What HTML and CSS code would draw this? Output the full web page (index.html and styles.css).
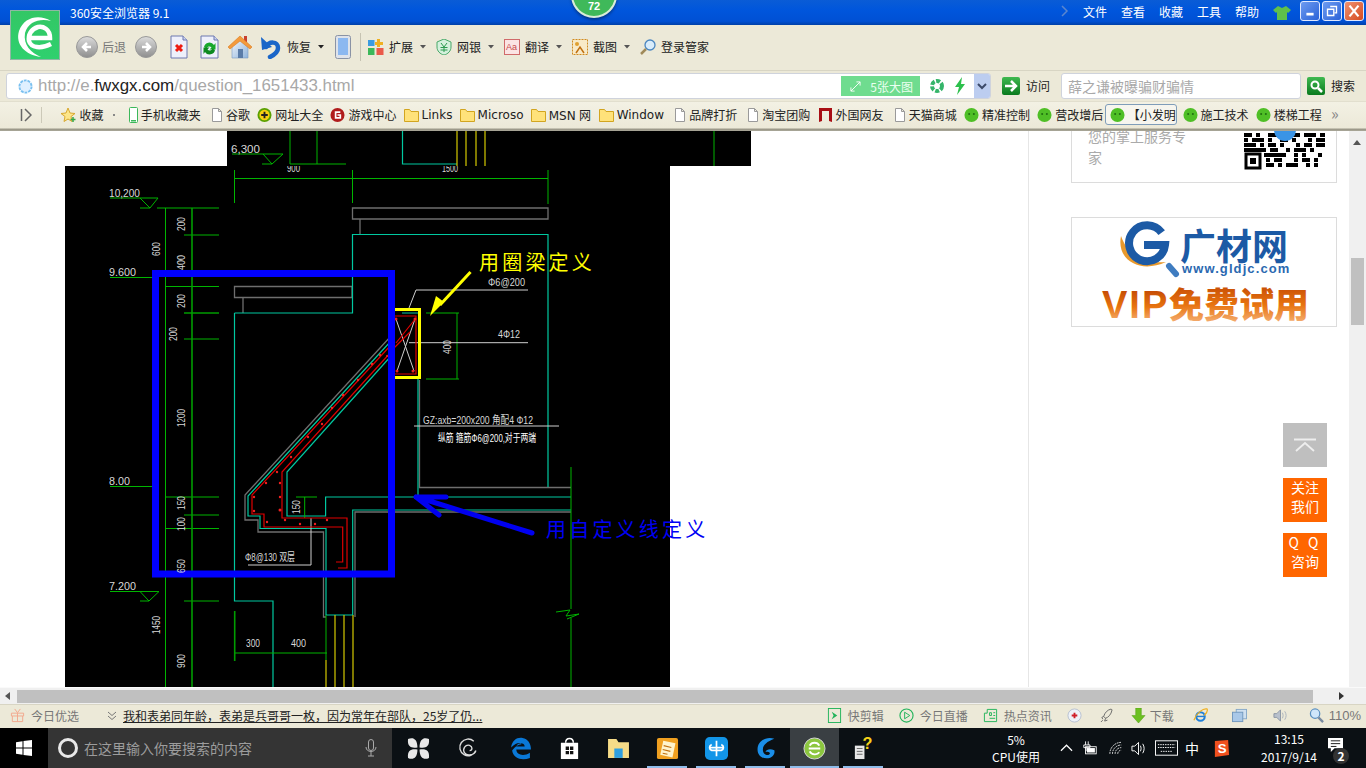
FILE: index.html
```html
<!DOCTYPE html>
<html lang="zh-CN">
<head>
<meta charset="utf-8">
<title>360安全浏览器 9.1</title>
<link rel="stylesheet" href="styles.css">
</head>
<body>
<svg class="defs" aria-hidden="true">
  <defs>
    <linearGradient id="gGray" x1="0" y1="0" x2="0" y2="1"><stop offset="0" stop-color="#dcdcdc"/><stop offset="1" stop-color="#8e8e8e"/></linearGradient>
    <linearGradient id="gGreen" x1="0" y1="0" x2="0" y2="1"><stop offset="0" stop-color="#3fb950"/><stop offset="1" stop-color="#0a7a1e"/></linearGradient>
    <linearGradient id="gWall" x1="0" y1="0" x2="1" y2="1"><stop offset="0" stop-color="#f2f6fb"/><stop offset="1" stop-color="#8fb4dc"/></linearGradient>
    <linearGradient id="gVip" x1="0" y1="0" x2="0" y2="1"><stop offset="0" stop-color="#b83c00"/><stop offset=".55" stop-color="#e87410"/><stop offset="1" stop-color="#f8c090"/></linearGradient>
    <clipPath id="lowerImage"><rect x="65" y="166" width="605" height="521"/></clipPath>
    <symbol id="file" viewBox="0 0 15 16"><path d="M4.500 1.500h6l3 3v10h-9z M10.500 1.500v3h3" fill="#fff" stroke="#9a9a9a"/></symbol>
    <symbol id="folder" viewBox="0 0 15 16"><path d="M.5 2.500h5l1.500 2h7.500v10H.5z" fill="#ffe27a" stroke="#d2a520"/></symbol>
    <symbol id="wechat" viewBox="0 0 16 16"><circle cx="8" cy="8" r="7.500" fill="#4fbf26"/><path d="M4 13l1-3 2 2z" fill="#4fbf26"/><circle cx="5.500" cy="7" r="1.100" fill="#1f6e10"/><circle cx="10.500" cy="7" r="1.100" fill="#1f6e10"/></symbol>
    <symbol id="caret" viewBox="0 0 6 4"><path d="M0 0h6L3 3.500z" fill="#555"/></symbol>
  </defs>
</svg>

<div class="screen">
  <header class="titlebar">
    <span class="title">360安全浏览器 9.1</span>
    <nav class="menu">
      <svg class="menu-chev" viewBox="0 0 8 12"><path d="M1 1l5 5-5 5" fill="none" stroke="#5a86cf" stroke-width="1.500"/></svg>
      <span>文件</span><span>查看</span><span>收藏</span><span>工具</span><span>帮助</span>
      <svg class="shirt" viewBox="0 0 18 16"><path d="M5 1l4 2 4-2 5 4-3 3-1-1v8H4V7L3 8 0 5z" fill="#5fc04a"/></svg>
    </nav>
    <div class="winbtns">
      <span class="winbtn"><svg viewBox="0 0 20 20"><rect x="6" y="12" width="8" height="3" fill="#fff"/></svg></span>
      <span class="winbtn"><svg viewBox="0 0 20 20"><path d="M8 5h7v7h-2 M5 8h7v7H5z" fill="none" stroke="#fff" stroke-width="1.500"/></svg></span>
      <span class="winbtn close"><svg viewBox="0 0 20 20"><path d="M5 4l10 12M15 4L5 16" stroke="#fff" stroke-width="2.500"/></svg></span>
    </div>
  </header>

  <div class="toolbar">
    <svg class="tb-back" viewBox="0 0 22 22"><circle cx="11" cy="11" r="10.500" fill="url(#gGray)" stroke="#999"/><path d="M15 11H8M11 7l-4 4 4 4" fill="none" stroke="#fff" stroke-width="2.500"/></svg>
    <span class="tb-label muted back-label">后退</span>
    <svg class="tb-fwd" viewBox="0 0 22 22"><circle cx="11" cy="11" r="10.500" fill="url(#gGray)" stroke="#999"/><path d="M7 11h7M11 7l4 4-4 4" fill="none" stroke="#fff" stroke-width="2.500"/></svg>
    <svg class="tb-doc" viewBox="0 0 18 24"><path d="M1 1h12l4 4v18H1z" fill="#eef0fb" stroke="#6c78b0"/><path d="M13 1v4h4" fill="#cdd4ee" stroke="#6c78b0"/><path d="M6 10l6 6M12 10l-6 6" stroke="#ee1c10" stroke-width="3"/></svg>
    <svg class="tb-doc2" viewBox="0 0 19 24"><path d="M1 1h13l4 4v18H1z" fill="#eef0fb" stroke="#6c78b0"/><path d="M14 1v4h4" fill="#cdd4ee" stroke="#6c78b0"/><path d="M4 12a5.500 5.500 0 0 1 10-2l1.500-2v6.500H9.500l2-2a3 3 0 0 0-5 1z" fill="#18a82c"/><path d="M15 15a5.500 5.500 0 0 1-10 2l-1.500 2v-6.500h6l-2 2a3 3 0 0 0 5-1z" fill="#0d8a20"/></svg>
    <svg class="tb-home" viewBox="0 0 24 26"><rect x="16" y="2" width="3" height="6" fill="#c84030"/><path d="M4 12L12 5l8 7v12H4z" fill="url(#gWall)" stroke="#7a9cc4" stroke-width=".6"/><path d="M12 2L0 13l2 2 10-8 10 8 2-2z" fill="#f49a3c" stroke="#d87c20" stroke-width=".6"/><rect x="10" y="15" width="5" height="9" fill="#5a7ca8"/></svg>
    <svg class="tb-undo" viewBox="0 0 22 24"><path d="M7 12C10 6 19 6 19 13c0 4-4 7-8 9" fill="none" stroke="#1a66c8" stroke-width="4.500" stroke-linecap="round"/><path d="M2 2l1 13 10-3z" fill="#1a66c8"/></svg>
    <span class="tb-label restore-label">恢复</span>
    <svg class="tb-caret dark" viewBox="0 0 6 4"><path d="M0 0h6L3 3.500z" fill="#222"/></svg>
    <svg class="tb-phone" viewBox="0 0 16 24"><rect x=".5" y=".5" width="15" height="23" rx="2" fill="#dfe3ea" stroke="#8a93a5"/><rect x="3" y="3" width="10" height="17" fill="#8cb8f0"/></svg>
    <span class="tb-sep"></span>
    <div class="tool">
      <svg viewBox="0 0 16 16"><rect x="0" y="1" width="6.500" height="6" fill="#3b9be0"/><path d="M12 0v3h3v3h-3v2H9V6H7V3h2V0z" fill="#f0b020"/><rect x="0" y="9" width="6.500" height="7" fill="#3cb85a"/><rect x="8.500" y="9" width="7" height="7" fill="#ea5a4a"/></svg>
      <span class="tb-label">扩展</span><svg class="tb-caret" viewBox="0 0 6 4"><use href="#caret"/></svg>
    </div>
    <div class="tool">
      <svg viewBox="0 0 16 16"><path d="M8 0l7 3v5c0 4-3 7-7 8-4-1-7-4-7-8V3z" fill="#d4f0dc" stroke="#48a868"/><path d="M5 4l3 4 3-4M4.500 8.500h7M4.500 11h7M8 8v5" fill="none" stroke="#2c9a50"/></svg>
      <span class="tb-label">网银</span><svg class="tb-caret" viewBox="0 0 6 4"><use href="#caret"/></svg>
    </div>
    <div class="tool">
      <svg viewBox="0 0 16 16"><rect x=".5" y=".5" width="15" height="15" fill="#fbe4e4" stroke="#d06a6a"/><text class="aa" x="2" y="11">Aa</text></svg>
      <span class="tb-label">翻译</span><svg class="tb-caret" viewBox="0 0 6 4"><use href="#caret"/></svg>
    </div>
    <div class="tool">
      <svg viewBox="0 0 16 16"><rect x=".5" y=".5" width="15" height="15" fill="#f8eac8" stroke="#d08a20" stroke-dasharray="2 1"/><circle cx="5" cy="5" r="2" fill="#e0a030"/><path d="M4 14l4-6 4 6" fill="none" stroke="#c07010" stroke-width="1.500"/></svg>
      <span class="tb-label">截图</span><svg class="tb-caret" viewBox="0 0 6 4"><use href="#caret"/></svg>
    </div>
    <div class="tool last">
      <svg viewBox="0 0 16 16"><circle cx="10" cy="6" r="5" fill="#d8ecfb" stroke="#4a86c0" stroke-width="1.300"/><path d="M6 10l-5 5" stroke="#a08a5a" stroke-width="2.500"/></svg>
      <span class="tb-label">登录管家</span>
    </div>
  </div>

  <div class="addressbar">
    <div class="urlbox">
      <svg class="url-icon" viewBox="0 0 16 16"><circle cx="8" cy="8" r="6.500" fill="#dff0ff" stroke="#7ac0f0" stroke-width="2" stroke-dasharray="3 1"/></svg>
      <span class="url">http://e.<b>fwxgx.com</b>/question_1651433.html</span>
      <span class="bigimg"><svg viewBox="0 0 12 12"><path d="M1 11l10-10M7 1h4v4M1 7v4h4" fill="none" stroke="#fff"/></svg>5张大图</span>
      <svg class="shutter" viewBox="0 0 16 16"><circle cx="8" cy="8" r="5" fill="none" stroke="#35b56a" stroke-width="4" stroke-dasharray="4 1.500"/></svg>
      <svg class="bolt" viewBox="0 0 12 18"><path d="M8 0L1 10h4l-2 8 8-11H7z" fill="#2cc04c"/></svg>
      <span class="urldrop"><svg viewBox="0 0 10 7"><path d="M1 1l4 4 4-4" fill="none" stroke="#3c4a6a" stroke-width="2"/></svg></span>
    </div>
    <svg class="go" viewBox="0 0 18 18"><rect width="18" height="18" rx="2" fill="url(#gGreen)"/><path d="M3 9h10M9 4l5 5-5 5" fill="none" stroke="#fff" stroke-width="2.500"/></svg>
    <span class="tb-label visit">访问</span>
    <div class="searchbox">薛之谦被曝骗财骗情</div>
    <svg class="searchbtn" viewBox="0 0 18 18"><rect width="18" height="18" rx="2" fill="url(#gGreen)"/><circle cx="8" cy="8" r="3.500" fill="none" stroke="#fff" stroke-width="2"/><path d="M11 11l4 4" stroke="#fff" stroke-width="2.500"/></svg>
    <span class="tb-label">搜索</span>
  </div>

  <div class="favbar">
    <svg class="fav-toggle" viewBox="0 0 12 14"><path d="M1.500 1v12" stroke="#666" stroke-width="1.500"/><path d="M5 1l6 6-6 6" fill="none" stroke="#666" stroke-width="1.500"/></svg>
    <span class="fav-sep"></span>
    <div class="fav star"><svg viewBox="0 0 16 16"><path d="M7 1l2 5 5 .5-4 3 1 5-4-2.500L3 14.500l1-5-4-3L5 6z" fill="#fde68a" stroke="#d8a830"/><path d="M12 10v5M9.500 12.500h5" stroke="#38a848" stroke-width="1.500"/></svg><span>收藏</span></div>
    <span class="fav-dot"></span>
    <div class="fav phone"><svg class="narrow" viewBox="0 0 9 16"><rect x=".5" y=".5" width="8" height="15" rx="1" fill="#fff" stroke="#3cb85a"/><rect x="2" y="13" width="5" height="1.500" fill="#3cb85a"/></svg><span>手机收藏夹</span></div>
    <div class="fav"><svg viewBox="0 0 15 16"><use href="#file"/></svg><span>谷歌</span></div>
    <div class="fav"><svg viewBox="0 0 16 16"><circle cx="8" cy="8" r="7.500" fill="#5aa000"/><circle cx="8" cy="8" r="5.500" fill="#f8d010"/><path d="M8 4.500v7M4.500 8h7" stroke="#222" stroke-width="2"/></svg><span>网址大全</span></div>
    <div class="fav"><svg viewBox="0 0 16 16"><circle cx="8" cy="8" r="7.500" fill="#b01c1c"/><path d="M11 5H6v6h5V8H8" fill="none" stroke="#fff" stroke-width="1.800"/></svg><span>游戏中心</span></div>
    <div class="fav"><svg viewBox="0 0 15 16"><use href="#folder"/></svg><span class="latin">Links</span></div>
    <div class="fav"><svg viewBox="0 0 15 16"><use href="#folder"/></svg><span class="latin">Microso</span></div>
    <div class="fav"><svg viewBox="0 0 15 16"><use href="#folder"/></svg><span class="latin">MSN 网</span></div>
    <div class="fav"><svg viewBox="0 0 15 16"><use href="#folder"/></svg><span class="latin">Window</span></div>
    <div class="fav"><svg viewBox="0 0 15 16"><use href="#file"/></svg><span>品牌打折</span></div>
    <div class="fav"><svg viewBox="0 0 15 16"><use href="#file"/></svg><span>淘宝团购</span></div>
    <div class="fav"><svg viewBox="0 0 15 16"><path d="M1 1h13v14l-3-1V4H4v10l-3 1z" fill="#a80e14"/></svg><span>外国网友</span></div>
    <div class="fav"><svg viewBox="0 0 15 16"><use href="#file"/></svg><span>天猫商城</span></div>
    <div class="fav"><svg viewBox="0 0 16 16"><use href="#wechat"/></svg><span>精准控制</span></div>
    <div class="fav"><svg viewBox="0 0 16 16"><use href="#wechat"/></svg><span>营改增后</span></div>
    <div class="fav selected"><svg viewBox="0 0 16 16"><use href="#wechat"/></svg><span>【小发明</span></div>
    <div class="fav"><svg viewBox="0 0 16 16"><use href="#wechat"/></svg><span>施工技术</span></div>
    <div class="fav"><svg viewBox="0 0 16 16"><use href="#wechat"/></svg><span>楼梯工程</span></div>
    <span class="fav-more">»</span>
  </div>

  <main class="viewport">
    <div class="page">
      <article class="article">
        <svg class="cad" viewBox="0 131 1028 556" width="1028" height="556">
          <rect x="227" y="131" width="524" height="35" fill="#000"/>
          <rect x="65" y="166" width="605" height="521" fill="#000"/>

          <path class="c-grey" d="M352.500 208H548V219H352.500z M360 219V234 M234.500 286.500H352V297.500H234.500z M243 297.500V313 M391 336L245 495V520H258V532H323.500V617H326 M355 617V512H571 M419.500 380V487.500H571"/>
          <path class="c-teal" d="M402.500 131V164H457 M234.500 313H352.500V234.500H548V487 M234.500 313V601H273V687 M391 341L248 496V516H260V528.500H326V615H352.700V510H571 M391 356L287 472V516H325.600V497H571 M418 379V497 M402 313H418"/>
          <path class="c-green" d="M290 131V164 M317 131V164 M290 164H346 M714 131V166 M232 154H283 M263 154L272 164L283 154 M262 164H272 M234.500 178.500H548 M234.500 170V203 M352.500 170V203 M548 170V204 M110 198H158 M140 198L150 208L158 198 M140 208H150 M157 208H219 M165.500 208V687 M184 235H219 M110 277.500H152 M165 286.500H219 M184 339H219 M426 313H459 M426 379H459 M457 313V379 M110 486.500H152 M165 497H219 M184 515H219 M165 528.500H219 M110 591.500H159 M140 591.500L149 601L159 591.500 M140 601H149 M184 601H219 M296 497H317 M304.700 497V518 M234.500 653H327 M326 615V660 M571 467V609 M571 618V687 M556 612L570 610L566 616L579 614L567 619"/>
          <path class="c-green thick" d="M192 208V687 M234.700 611V661 M184 313H219"/>
          <path class="c-yellow" d="M457 131V166 M466 131V166 M476 131V166 M485 131V166 M326 660V687 M335 615V687 M344 615V687 M353 615V687"/>
          <path class="c-white" d="M409 308L416 290H528 M409 342.700H528 M414 426H559 M311 518V565H248 M396 319L414 371 M415 319L397 371"/>
          <path class="c-red" d="M391 345L252 495V514H264V527H342.700V562H336 M391 352L282 472V518H347V568H338 M394 316H416V374H394z M396 343L416 318 M392 350L410 332"/>
          <g class="red-dots">
            <circle cx="396" cy="319" r="1.500"/><circle cx="415" cy="319" r="1.500"/><circle cx="397" cy="371" r="1.500"/><circle cx="413" cy="371" r="1.500"/><circle cx="387" cy="356" r="1"/><circle cx="380" cy="355" r="1.200"/><circle cx="372" cy="364" r="1.200"/><circle cx="358" cy="380" r="1.200"/><circle cx="343" cy="395" r="1.200"/><circle cx="332" cy="408" r="1.200"/><circle cx="322" cy="424" r="1.200"/><circle cx="308" cy="437" r="1.200"/><circle cx="291" cy="457" r="1.200"/><circle cx="277" cy="472" r="1.200"/><circle cx="266" cy="483" r="1.200"/><circle cx="254" cy="497" r="1.200"/><circle cx="280" cy="483" r="1.200"/><circle cx="280" cy="497" r="1.200"/><circle cx="254" cy="511" r="1.200"/><circle cx="280" cy="510" r="1.500"/><circle cx="267" cy="522" r="1.200"/><circle cx="285" cy="520" r="1.200"/><circle cx="300" cy="524" r="1.200"/><circle cx="315" cy="524" r="1.200"/><circle cx="327" cy="520" r="1.200"/>
          </g>
          <path class="c-yellow-frame" d="M390 309.500H419.500V377.500H390"/>
          <path class="c-yellow-arrow" d="M470.500 272L440 305"/>
          <path class="c-yellow-head" d="M430 316L444 302L436 296z"/>
          <path class="c-blue-arrow" d="M532 533L420 498 M416 497H446 M416 497L439 515"/>
          <rect class="c-blue-frame" x="155.500" y="273.500" width="236" height="300.500"/>

          <g class="dim">
            <text x="231" y="153" textLength="29" lengthAdjust="spacingAndGlyphs">6,300</text>
            <g clip-path="url(#lowerImage)">
              <text x="287" y="172" textLength="13" lengthAdjust="spacingAndGlyphs">900</text>
              <text x="442" y="172" textLength="16" lengthAdjust="spacingAndGlyphs">1500</text>
            </g>
            <text x="109" y="197" textLength="31" lengthAdjust="spacingAndGlyphs">10,200</text>
            <text x="109" y="276" textLength="27" lengthAdjust="spacingAndGlyphs">9.600</text>
            <text x="109" y="485" textLength="21" lengthAdjust="spacingAndGlyphs">8.00</text>
            <text x="109" y="590" textLength="27" lengthAdjust="spacingAndGlyphs">7.200</text>
            <text x="488" y="286" textLength="37" lengthAdjust="spacingAndGlyphs">Φ6@200</text>
            <text x="498" y="338" textLength="22" lengthAdjust="spacingAndGlyphs">4Φ12</text>
            <text x="423" y="424" textLength="110" lengthAdjust="spacingAndGlyphs">GZ:axb=200x200 角配4 Φ12</text>
            <text class="bright" x="438" y="442" textLength="98" lengthAdjust="spacingAndGlyphs">纵筋 箍筋Φ6@200,对于两端</text>
            <text x="245" y="561" textLength="50" lengthAdjust="spacingAndGlyphs">Φ8@130 双层</text>
            <text x="246" y="647" textLength="14" lengthAdjust="spacingAndGlyphs">300</text>
            <text x="291" y="647" textLength="15" lengthAdjust="spacingAndGlyphs">400</text>
            <text transform="translate(185 231) rotate(-90)" textLength="14" lengthAdjust="spacingAndGlyphs">200</text>
            <text transform="translate(160 256) rotate(-90)" textLength="14" lengthAdjust="spacingAndGlyphs">600</text>
            <text transform="translate(185 270) rotate(-90)" textLength="15" lengthAdjust="spacingAndGlyphs">400</text>
            <text transform="translate(185 308) rotate(-90)" textLength="14" lengthAdjust="spacingAndGlyphs">200</text>
            <text transform="translate(177 341) rotate(-90)" textLength="14" lengthAdjust="spacingAndGlyphs">200</text>
            <text transform="translate(185 427) rotate(-90)" textLength="18" lengthAdjust="spacingAndGlyphs">1200</text>
            <text transform="translate(185 510) rotate(-90)" textLength="14" lengthAdjust="spacingAndGlyphs">150</text>
            <text transform="translate(185 531) rotate(-90)" textLength="14" lengthAdjust="spacingAndGlyphs">100</text>
            <text transform="translate(185 573) rotate(-90)" textLength="14" lengthAdjust="spacingAndGlyphs">650</text>
            <text transform="translate(160 634) rotate(-90)" textLength="18" lengthAdjust="spacingAndGlyphs">1450</text>
            <text transform="translate(185 668) rotate(-90)" textLength="14" lengthAdjust="spacingAndGlyphs">900</text>
            <text transform="translate(300 514) rotate(-90)" textLength="14" lengthAdjust="spacingAndGlyphs">150</text>
            <text transform="translate(451 354) rotate(-90)" textLength="14" lengthAdjust="spacingAndGlyphs">400</text>
          </g>
          <text class="note note-yellow" x="479" y="270">用圈梁定义</text>
          <text class="note note-blue" x="546" y="537">用自定义线定义</text>
        </svg>
      </article>
      <aside class="sidebar">
        <div class="card card-service">
          <p>您的掌上服务专家</p>
          <svg class="qr" viewBox="0 0 81 39">
            <g class="qr-rows">
              <path stroke-dasharray="8 4 4 8 12 4 4 4 8 4 12 4 9" d="M0 4H81"/>
              <path stroke-dasharray="4 4 12 4 4 8 8 4 4 12 4 4 13" d="M0 9H81"/>
              <path stroke-dasharray="12 4 4 4 8 4 4 12 4 4 8 4 13" d="M0 14H81"/>
              <path stroke-dasharray="22 4 8 8 4 4 12 4 4 11" d="M0 19H81"/>
              <path stroke-dasharray="22 8 4 4 4 12 4 8 15" d="M20 24H81"/>
              <path stroke-dasharray="4 4 8 12 4 4 8 4 4 8" d="M22 29H81"/>
              <path stroke-dasharray="8 4 4 4 12 8 4 4 4 8" d="M22 34H81"/>
            </g>
            <path class="qr-finder" d="M2 23h14v14H2z"/>
            <rect class="qr-core" x="6" y="27" width="6" height="6"/>
            <circle class="qr-dot" cx="41" cy="-1" r="11"/>
          </svg>
        </div>
        <div class="card card-ad">
          <svg viewBox="0 0 264 108" width="264" height="108">
            <path class="ad-crescent" d="M49 18C44 42 68 56 94 44C72 46 56 38 49 18z"/>
            <path class="ad-g" d="M89.700 14.700A18 18 0 1 0 93 27H72"/>
            <path class="ad-handle" d="M97 48L104 56"/>
            <text class="ad-name" x="108" y="42">广材网</text>
            <text class="ad-url" x="110" y="55">www.gldjc.com</text>
            <text class="ad-vip" x="30" y="100">VIP</text>
            <text class="ad-vip cjk" x="97" y="100">免费试用</text>
          </svg>
        </div>
      </aside>
      <div class="floats">
        <a class="float top"><svg viewBox="0 0 24 14"><path d="M1 1.500h22M3 13l9-8 9 8" fill="none" stroke="#eee" stroke-width="1.800"/></svg></a>
        <a class="float orange">关注<br>我们</a>
        <a class="float orange"><span class="qq">Q Q</span><br>咨询</a>
      </div>
    </div>
    <div class="vscroll">
      <svg viewBox="0 0 8 5"><path d="M0 5L4 0l4 5z" fill="#555"/></svg>
      <span class="vthumb"></span>
    </div>
  </main>

  <div class="hscroll">
    <svg viewBox="0 0 5 8"><path d="M5 0L0 4l5 4z" fill="#555"/></svg>
    <span class="hthumb"></span>
    <svg viewBox="0 0 5 8"><path d="M0 0l5 4-5 4z" fill="#333"/></svg>
  </div>

  <div class="statusbar">
    <svg class="st-gift" viewBox="0 0 16 16"><path d="M1.500 5.500h13v3h-1v6h-11v-6h-1zM8 5.500v9M2.500 8.500h11M5 1l3 4 3-4" fill="none" stroke="#f2a68c"/></svg>
    <span class="st-text st-today">今日优选</span>
    <svg class="st-chev" viewBox="0 0 10 10"><path d="M1 1l4 3.500L9 1M1 5l4 3.500L9 5" fill="none" stroke="#777"/></svg>
    <a class="st-news">我和表弟同年龄，表弟是兵哥哥一枚，因为常年在部队，25岁了仍...</a>
    <div class="st-right">
      <svg class="ic" viewBox="0 0 16 16"><rect x="1.500" y=".5" width="13" height="15" fill="none" stroke="#21b35a"/><path d="M5 4l6 4-6 4 2-4z" fill="#21b35a"/></svg><span class="st-text">快剪辑</span>
      <svg class="ic gap" viewBox="0 0 16 16"><circle cx="8" cy="8" r="7" fill="none" stroke="#21b35a" stroke-width="1.200"/><path d="M6 4.500L11.500 8 6 11.500z" fill="none" stroke="#21b35a"/></svg><span class="st-text">今日直播</span>
      <svg class="ic gap" viewBox="0 0 16 16"><path d="M4.500 1.500h10v13h-13v-9h3zM7 5h2v3H7zM11 5h2M11 8h2M7 11h6" fill="none" stroke="#21b35a"/></svg><span class="st-text">热点资讯</span>
      <svg class="ic gap" viewBox="0 0 16 16"><circle cx="8" cy="8" r="7" fill="#eef2f8" stroke="#b6c0d0"/><path d="M8 5v6M5 8h6" stroke="#d0202a" stroke-width="2"/></svg>
      <svg class="ic rocket" viewBox="0 0 14 16"><path d="M12 1C8 2 5 5 4 9l2 2c3-1 6-4 7-9zM4 9l-2 1 1 2M6 11l-1 3 3-1M3 13l-2 2" fill="none" stroke="#666"/></svg>
      <svg class="ic dl" viewBox="0 0 16 16"><path d="M5 0h6v8h4l-7 8-7-8h4z" fill="#6cc020" stroke="#4a9a10" stroke-width=".5"/></svg><span class="st-text dl-label">下载</span>
      <svg class="ic ie" viewBox="0 0 16 16"><circle cx="8" cy="9" r="4.500" fill="none" stroke="#1f7fd8" stroke-width="2.200"/><path d="M4 9h8" stroke="#1f7fd8" stroke-width="1.500"/><path d="M1 13C4 5 11 0 15 1c1 2-1 5-3 7" fill="none" stroke="#f0b020" stroke-width="1.300"/></svg>
      <svg class="ic win" viewBox="0 0 16 16"><rect x="4.500" y="1.500" width="11" height="10" fill="#cfe0f0" stroke="#86a8c8"/><rect x=".5" y="4.500" width="11" height="10" fill="#a9c8e8" stroke="#6f96bd"/></svg>
      <svg class="ic spk" viewBox="0 0 16 16"><path d="M1 6h3l4-4v12l-4-4H1z" fill="#b8c0cc" stroke="#8a94a4"/><path d="M10 5c1 2 1 4 0 6M12.500 3.500c2 3 2 6 0 9" fill="none" stroke="#a8b0bc"/></svg>
      <svg class="ic zoom" viewBox="0 0 16 16"><circle cx="6.500" cy="6" r="5" fill="#cfe6fa" stroke="#5a8fc0" stroke-width="1.300"/><path d="M10 10l5 5" stroke="#788aa0" stroke-width="2.500"/></svg><span class="st-text zoom-label">110%</span>
    </div>
  </div>

  <footer class="taskbar">
    <div class="start"><svg viewBox="0 0 16 16"><path d="M0 2.200L6.500 1.300V7.500H0zM7.500 1.100L16 0V7.500H7.500zM0 8.500H6.500V14.700L0 13.800zM7.500 8.500H16V16L7.500 14.900z" fill="#fff"/></svg></div>
    <div class="tsearch">
      <span class="cortana"></span>
      <span class="tsearch-text">在这里输入你要搜索的内容</span>
      <svg viewBox="0 0 12 18"><rect x="3.500" y=".5" width="5" height="11" rx="2.500" fill="none" stroke="#aaa"/><path d="M1 8c0 6 10 6 10 0M6 13v4M3 17h6" fill="none" stroke="#aaa"/></svg>
    </div>
    <div class="slots">
      <span class="slot"><svg viewBox="0 0 22 22"><path d="M1 2c4-2 9-1 9 8-5 1-10 0-9-8zM21 2c1 8-4 9-9 8 0-9 5-10 9-8zM1 20c-1-8 4-9 9-8 0 9-5 10-9 8zM21 20c-4 2-9 1-9-8 5-1 10 0 9 8z" fill="#e8e8e8"/></svg></span>
      <span class="slot"><svg viewBox="0 0 20 22"><path d="M16 4A8 8 0 1 0 18 13c-1 4-8 6-11 2-2-4 1-8 5-7 3 1 3 5 0 5" fill="none" stroke="#ddd" stroke-width="1.300"/></svg></span>
      <span class="slot edge"><svg viewBox="0 0 22 22"><path d="M2 10C3 3 8 0 13 1c5 1 8 5 8 11H7c0 5 7 7 13 3v5c-7 3-16 1-17-7 3-4 6-6 9-6-1-2-5-2-10 3zM7 9h8c0-4-7-4-8 0z" fill="#0a78d7"/></svg></span>
      <span class="slot"><svg viewBox="0 0 20 24"><path d="M1 6h18v17H1z" fill="#fff"/><path d="M6 6c0-6 8-6 8 0" fill="none" stroke="#fff" stroke-width="1.500"/><path d="M6 10h3.500v3.500H6zM10.500 10H14v3.500h-3.500zM6 14.500h3.500V18H6zM10.500 14.500H14V18h-3.500z" fill="#111"/></svg></span>
      <span class="slot"><svg viewBox="0 0 22 20"><path d="M1 1h8l2 3h10v15H1z" fill="#f6dc88"/><rect x="7" y="10" width="8" height="9" fill="#2f9fe0"/></svg></span>
      <span class="slot lined"><svg viewBox="0 0 24 24"><rect x="1" y="1" width="22" height="22" rx="2" fill="#f0a020"/><path d="M6 5h13v15H6z" fill="#fff4cc" transform="rotate(12 12 12)"/><path d="M8 9l8 2M7 13l8 2M7 17l5 1" stroke="#c07010" stroke-width="1.200"/></svg></span>
      <span class="slot lined"><svg viewBox="0 0 24 24"><rect x="0" y="0" width="24" height="24" rx="5" fill="#1295e8"/><path d="M12 4v16M4 11h16M7 8c-3 1-3 5 0 6h10c3-1 3-5 0-6" fill="none" stroke="#fff" stroke-width="1.800"/></svg></span>
      <span class="slot lined"><svg viewBox="0 0 24 26"><path d="M22 2C12-1 3 5 3 14c0 7 6 11 12 10 5-1 8-5 7-9-5-2-9-1-10 2 3-1 5 0 5 2-2 3-8 1-8-5 0-5 5-9 13-12z" fill="#1a8ee8"/></svg></span>
      <span class="slot lined active"><svg viewBox="0 0 24 24"><circle cx="12" cy="12" r="11" fill="#8cc63f" stroke="#d8d8d8"/><path d="M6 12h12M17 9c-2-4-8-4-10 0M7 15c2 4 8 4 10 1" fill="none" stroke="#fff" stroke-width="2"/></svg></span>
      <span class="slot lined"><svg viewBox="0 0 20 24"><rect x="1" y="9" width="10" height="14" fill="#e8e8e8"/><path d="M3 12h6M3 15h6M3 18h6" stroke="#666"/><text class="q-mark" x="9" y="13">?</text></svg></span>
    </div>
    <div class="cpu"><span>5%</span><span>CPU使用</span></div>
    <div class="tray">
      <svg class="t-caret" viewBox="0 0 14 8"><path d="M1 7l6-6 6 6" fill="none" stroke="#fff" stroke-width="1.300"/></svg>
      <svg class="t-power" viewBox="0 0 18 16"><path d="M4 0v4M7 0v4M2 4h7v3H2zM5.500 7v4" stroke="#fff" fill="none"/><rect x="4" y="6" width="12" height="8" fill="none" stroke="#fff"/><rect x="5.500" y="7.500" width="9" height="5" fill="#fff"/></svg>
      <svg class="t-wifi" viewBox="0 0 16 16"><path d="M1 14A13 13 0 0 1 14 1M4 14A10 10 0 0 1 14 4M7 14a7 7 0 0 1 7-7M10 14a4 4 0 0 1 4-4" fill="none" stroke="#fff" stroke-dasharray="2 1"/></svg>
      <svg class="t-spk" viewBox="0 0 16 16"><path d="M1 5.500h3l4-4v13l-4-4H1z" fill="none" stroke="#fff"/><path d="M10 5c1 2 1 4 0 6M12.500 3c2 3 2 7 0 10" fill="none" stroke="#fff"/></svg>
      <svg class="t-kbd" viewBox="0 0 24 16"><rect x=".5" y=".5" width="23" height="15" fill="none" stroke="#fff"/><path d="M3 4.500h18M3 7.500h18M6 11.500h12" stroke="#fff" stroke-dasharray="1.500 1"/></svg>
      <span class="t-zh">中</span>
      <svg class="t-sogou" viewBox="0 0 18 20"><path d="M2 2l14-1 1 16-15 2z" fill="#f0501e"/><text class="s-mark" x="5" y="15">S</text></svg>
    </div>
    <div class="clock"><span>13:15</span><span>2017/9/14</span></div>
    <div class="notify">
      <svg viewBox="0 0 16 16"><path d="M0 0h16v11H7l-4 4v-4H0z" fill="#fff"/><path d="M3 3h10M3 6h10M3 9h6" stroke="#111"/></svg>
      <span class="badge">2</span>
    </div>
  </footer>

  <span class="logo"><svg viewBox="0 0 48 48"><path d="M40 10C28 3 13 6 8 20C4 33 14 44 30 46C20 42 12 34 14 22C17 10 30 7 40 10z" fill="#fff"/><path d="M20 27H39C39 18 32 15 27 16C20 18 17 24 18 30C20 37 30 38 40 33" fill="none" stroke="#fff" stroke-width="4.500"/></svg></span>
  <span class="badge-72">72</span>
</div>
</body>
</html>
```

FILE: styles.css
```css
* { box-sizing: border-box; }
html, body { margin: 0; padding: 0; }
body {
  width: 1366px;
  height: 768px;
  overflow: hidden;
  font-family: "Noto Sans CJK SC", "Liberation Sans", sans-serif;
  font-size: 12px;
  color: #222;
  background: #ece9d8;
}
svg { display: block; flex: none; }
.defs { width: 0; height: 0; }
.screen { position: relative; width: 1366px; height: 768px; display: flex; flex-direction: column; overflow: hidden; }

/* title bar */
.titlebar {
  height: 25px; flex: none; display: flex; align-items: center; color: #fff; padding-left: 70px;
  background: linear-gradient(#0a5cd6 0, #0056dc 40%, #0050d4 85%, #0040a8 100%);
}
.title { font-size: 12px; line-height: 25px; }
.menu { margin-left: auto; display: flex; align-items: center; gap: 14px; margin-top: -3px; }
.menu span { width: 24px; white-space: nowrap; }
.menu-chev { width: 8px; height: 12px; margin-right: 0; }
.shirt { width: 18px; height: 16px; margin-right: -5px; margin-top: 3px; }
.winbtns { display: flex; gap: 2px; margin-left: 14px; margin-right: 2px; align-self: flex-start; margin-top: 1px; }
.winbtn {
  width: 20px; height: 20px; border: 1px solid #dfe8ff; border-radius: 3px;
  background: linear-gradient(135deg, #6d9bf0, #2a62d8);
}
.winbtn.close { background: linear-gradient(135deg, #ef9272, #d64a1e); }

/* toolbar */
.toolbar { height: 45px; flex: none; display: flex; align-items: center; padding-left: 76px; padding-bottom: 2px; background: #ece9d8; }
.tb-label { font-size: 12px; white-space: nowrap; color: #222; }
.muted { color: #777; }
.tb-back { width: 22px; height: 22px; }
.back-label { margin-left: 4px; }
.tb-fwd { width: 22px; height: 22px; margin-left: 9px; }
.tb-doc { width: 18px; height: 24px; margin-left: 13px; }
.tb-doc2 { width: 19px; height: 24px; margin-left: 12px; }
.tb-home { width: 24px; height: 26px; margin-left: 9px; }
.tb-undo { width: 22px; height: 24px; margin-left: 7px; }
.restore-label { margin-left: 6px; }
.tb-caret { width: 6px; height: 4px; margin-left: 7px; }
.tb-phone { width: 16px; height: 24px; margin-left: 11px; }
.tb-sep { width: 1px; height: 28px; background: #c6c3b2; margin-left: 9px; margin-right: 7px; }
.tool { width: 68px; display: flex; align-items: center; }
.tool > svg:first-child { width: 16px; height: 16px; margin-right: 5px; }
.tool.last { width: auto; }
.aa { font: 9px "Liberation Sans", sans-serif; fill: #c84a4a; }

/* address bar */
.addressbar {
  height: 31px; flex: none; display: flex; align-items: center; padding: 0 0 0 6px;
  background: #ece9d8; border-top: 1px solid #d8d5c4;
}
.addressbar > .tb-label { margin-top: -2px; }
.urlbox {
  width: 985px; height: 26px; background: #fff; border: 1px solid #cfd3dc; border-radius: 3px;
  display: flex; align-items: center; padding-left: 11px;
}
.url-icon { width: 15px; height: 15px; margin-right: 5px; }
.url { font: 16.900px/24px "Liberation Sans", sans-serif; color: #a8a8a8; white-space: nowrap; }
.url b { font-weight: 400; color: #222; }
.bigimg {
  margin-left: auto; width: 79px; height: 20px; background: #6fdc8f; color: #eafff0;
  display: flex; align-items: center; justify-content: flex-end; padding-right: 7px; gap: 9px; font-size: 12px;
}
.bigimg svg { width: 11px; height: 11px; }
.shutter { width: 16px; height: 16px; margin-left: 9px; }
.bolt { width: 12px; height: 18px; margin-left: 9px; }
.urldrop {
  width: 16px; height: 24px; margin-left: 8px; background: #bccdf0; display: flex; align-items: center; justify-content: center; border-radius: 0 2px 2px 0;
}
.urldrop svg { width: 10px; height: 7px; }
.go { width: 18px; height: 18px; margin-left: 11px; }
.visit { margin-left: 6px; }
.searchbox {
  width: 240px; height: 26px; margin-left: 11px; background: #fff; border: 1px solid #cfd3dc; border-radius: 3px;
  padding-left: 6px; line-height: 24px; font-size: 14px; color: #a9a9a9; white-space: nowrap;
}
.searchbtn { width: 18px; height: 18px; margin-left: 6px; margin-right: 6px; }

/* favourites */
.favbar {
  height: 30px; flex: none; display: flex; align-items: center; gap: 7.200px; padding-left: 20px; padding-bottom: 4px;
  background: linear-gradient(#f3f1e4 0, #ece9d8 88%, #8e8b7c 96%, #b8b6a8 100%);
  border-top: 1px solid #e2dfce;
}
.fav { display: flex; align-items: center; gap: 3px; white-space: nowrap; color: #222; }
.fav svg { width: 15px; height: 16px; }
.fav svg.narrow { width: 9px; }
.fav.star { gap: 2px; }
.fav.star svg { width: 16px; }
.fav-toggle { width: 12px; height: 14px; margin-right: -3px; }
.fav-sep { width: 1px; height: 16px; background: #ccc9b8; margin-left: 5px; margin-right: 12px; }
.fav-dot { width: 2px; height: 2px; background: #888; margin: 0 7px 0 2px; }
.latin { font-family: "DejaVu Sans", sans-serif; font-size: 12px; }
.fav.selected {
  width: 72px; height: 21px; overflow: hidden; padding-left: 4px; gap: 3px; margin: 0 -1.500px 0 -5.500px;
  border: 1px solid #7f9db9; border-radius: 3px; background: #f6f5ee;
}
.fav-more { color: #888; font-size: 16px; margin-left: 2px; line-height: 16px; margin-top: -3px; }

/* page */
.viewport { height: 556px; flex: none; display: flex; background: #fff; }
.page { position: relative; width: 1349px; height: 556px; display: flex; overflow: hidden; }
.article { width: 1029px; border-right: 1px solid #e6e6e6; }
.cad { display: block; }
.c-grey, .c-teal, .c-green, .c-yellow, .c-white, .c-red { fill: none; stroke-width: 1; }
.c-grey { stroke: #6e6e6e; stroke-width: 1.300; }
.c-teal { stroke: #00c8a0; stroke-width: 1.200; }
.c-green { stroke: #00b400; }
.c-green.thick { stroke: #009c00; stroke-width: 1.600; }
.c-yellow { stroke: #d4c800; stroke-width: 1.200; }
.c-white { stroke: #cfcfcf; }
.c-red { stroke: #e00000; stroke-width: 1.200; }
.red-dots circle { fill: #f02020; }
.c-yellow-frame { fill: none; stroke: #ffff00; stroke-width: 3; }
.c-yellow-arrow { stroke: #ffff00; stroke-width: 3; fill: none; }
.c-yellow-head { fill: #ffff00; }
.c-blue-arrow { stroke: #0000f0; stroke-width: 5; stroke-linecap: round; fill: none; }
.c-blue-frame { fill: none; stroke: #0000ff; stroke-width: 7; }
.dim text { font: 11px "Liberation Sans", "Noto Sans CJK SC", sans-serif; fill: #d8d8d8; }
.dim text.bright { fill: #fff; }
.note { font-family: "Noto Sans CJK SC", sans-serif; font-size: 20px; letter-spacing: 3.200px; }
.note-yellow { fill: #ffff00; }
.note-blue { fill: #0000f5; }

/* sidebar */
.sidebar { padding-left: 42px; }
.card { width: 266px; border: 1px solid #dcdcdc; background: #fff; }
.card-service { height: 52px; border-top: 0; position: relative; display: flex; padding-left: 16px; }
.card-service p { margin: -5px 0 0; width: 100px; font-size: 14px; line-height: 21px; color: #aaa; }
.qr { position: absolute; left: 172px; top: 0; width: 81px; height: 39px; overflow: hidden; }
.qr-rows path { fill: none; stroke: #000; stroke-width: 4; }
.qr-finder { fill: #fff; stroke: #000; stroke-width: 3; }
.qr-core { fill: #000; }
.qr-dot { fill: #3a94e6; }
.card-ad { height: 110px; margin-top: 34px; }
.ad-g { fill: none; stroke: #1c5aa5; stroke-width: 8; }
.ad-crescent { fill: #e8992c; }
.ad-handle { stroke: #3f7cc0; stroke-width: 6; stroke-linecap: round; }
.ad-name { font: 700 36px "Noto Sans CJK SC", sans-serif; fill: #1c5aa5; }
.ad-url { font: 700 13px "Liberation Sans", sans-serif; fill: #2a68b0; letter-spacing: 1.100px; }
.ad-vip { font: 700 38px "Liberation Sans", sans-serif; fill: url(#gVip); letter-spacing: 2px; }
.ad-vip.cjk { font: 900 35px "Noto Sans CJK SC", sans-serif; letter-spacing: 0; }

/* floating buttons */
.floats { position: absolute; left: 1283px; top: 292px; display: flex; flex-direction: column; gap: 11px; }
.float { width: 44px; height: 44px; display: flex; align-items: center; justify-content: center; text-align: center; color: #fff; font-size: 14px; line-height: 19px; }
.float.orange { display: block; background: #ff6600; }
.float.top { background: #bfbfbf; }
.float.top svg { width: 24px; height: 14px; }
.qq { letter-spacing: 3px; }

/* scrollbars */
.vscroll { width: 17px; height: 556px; background: #f0f0f0; position: relative; padding-top: 9px; }
.vscroll svg { width: 8px; height: 5px; margin-left: 4px; }
.vthumb { position: absolute; left: 2px; top: 127px; width: 13px; height: 67px; background: #c0c0c0; }
.hscroll { height: 17px; flex: none; background: #f0f0f0; display: flex; align-items: center; border-top: 1px solid #fafafa; }
.hscroll svg { width: 5px; height: 8px; margin-left: 5px; }
.hscroll svg:last-child { margin-left: 26px; }
.hthumb { width: 1296px; height: 13px; background: #c0c0c0; margin-left: 7px; }

/* status bar */
.statusbar { height: 24px; flex: none; display: flex; align-items: center; padding-left: 10px; padding-bottom: 2px; background: #ece9d8; border-top: 1px solid #d8d5c4; color: #777; }
.st-gift { width: 15px; height: 15px; }
.st-text { color: #777; white-space: nowrap; }
.st-today { margin-left: 6px; }
.st-chev { width: 10px; height: 10px; margin-left: 28px; }
.st-news { margin-left: 6px; color: #222; text-decoration: underline; white-space: nowrap; width: 360px; }
.st-right { margin-left: auto; display: flex; align-items: center; padding-right: 5px; }
.ic { width: 15px; height: 15px; margin-right: 6px; }
.ic.gap { margin-left: 15px; }
.ic.rocket { width: 13px; margin-left: 12px; margin-right: 0; }
.ic.dl { margin-left: 18px; margin-right: 4px; }
.dl-label { margin-right: 19px; }
.ic.ie { margin-right: 0; }
.ic.win { margin-left: 24px; margin-right: 0; }
.ic.spk { margin-left: 26px; margin-right: 0; }
.ic.zoom { margin-left: 21px; margin-right: 5px; }
.zoom-label { font-family: "Liberation Sans", sans-serif; font-size: 13px; }

/* task bar */
.taskbar { height: 40px; flex: none; display: flex; align-items: stretch; background: #0b1014; color: #fff; }
.start { width: 48px; background: #000; display: flex; align-items: center; justify-content: center; }
.start svg { width: 16px; height: 16px; }
.tsearch { width: 344px; background: #343434; display: flex; align-items: center; padding-left: 10px; color: #9c9c9c; font-size: 14px; }
.cortana { width: 20px; height: 20px; border: 3px solid #e8e8e8; border-radius: 50%; margin-right: 6px; }
.tsearch-text { width: 281px; white-space: nowrap; }
.tsearch svg { width: 12px; height: 18px; }
.slots { display: flex; margin-left: 2px; }
.slot { position: relative; width: 49px; display: flex; align-items: center; justify-content: center; }
.slot svg { width: 23px; height: 23px; }
.slot.edge { margin-left: 4px; }
.slot.lined::after { content: ""; position: absolute; left: 4px; right: 5px; bottom: 0; height: 2px; background: #8fbcea; }
.slot.active { background: #3a3f43; }
.slot.active::after { left: 0; right: 0; }
.q-mark { font: 700 17px "Liberation Sans", sans-serif; fill: #f6d21a; }
.cpu { width: 60px; margin-left: 98px; display: flex; flex-direction: column; align-items: center; justify-content: center; font-size: 12px; line-height: 17px; white-space: nowrap; }
.tray { display: flex; align-items: center; margin-left: 14px; }
.t-caret { width: 13px; height: 8px; }
.t-power { width: 16px; height: 15px; margin-left: 9px; }
.t-wifi { width: 14px; height: 15px; margin-left: 11px; }
.t-spk { width: 15px; height: 15px; margin-left: 8px; }
.t-kbd { width: 23px; height: 16px; margin-left: 9px; }
.t-zh { font-size: 14px; margin-left: 7px; width: 16px; }
.t-sogou { width: 17px; height: 19px; margin-left: 12px; }
.s-mark { font: 700 14px "Liberation Sans", sans-serif; fill: #fff; }
.clock { width: 76px; margin-left: 21px; display: flex; flex-direction: column; align-items: center; justify-content: center; font-size: 12px; line-height: 18px; white-space: nowrap; }
.notify { position: relative; width: 30px; display: flex; align-items: center; }
.notify svg { width: 15px; height: 15px; margin-left: 1px; margin-top: -5px; }
.badge { position: absolute; left: 6px; top: 20px; width: 16px; height: 16px; border-radius: 50%; background: #333; color: #fff; font-size: 12px; line-height: 16px; text-align: center; font-weight: 700; }

/* overlays */
.logo { position: absolute; left: 10px; top: 10px; width: 50px; height: 50px; background: linear-gradient(#33c765, #2fd06e); border: 1px solid #8fb8a4; }
.logo svg { width: 48px; height: 48px; }
.badge-72 {
  position: absolute; left: 571px; top: -28px; width: 46px; height: 46px; border-radius: 50%;
  background: #3fb95a; border: 2px solid #d8ecd8; box-shadow: 0 2px 3px rgba(0, 0, 0, .35);
  color: #fff; font: 700 11px/64px "Liberation Sans", sans-serif; text-align: center;
}
```
